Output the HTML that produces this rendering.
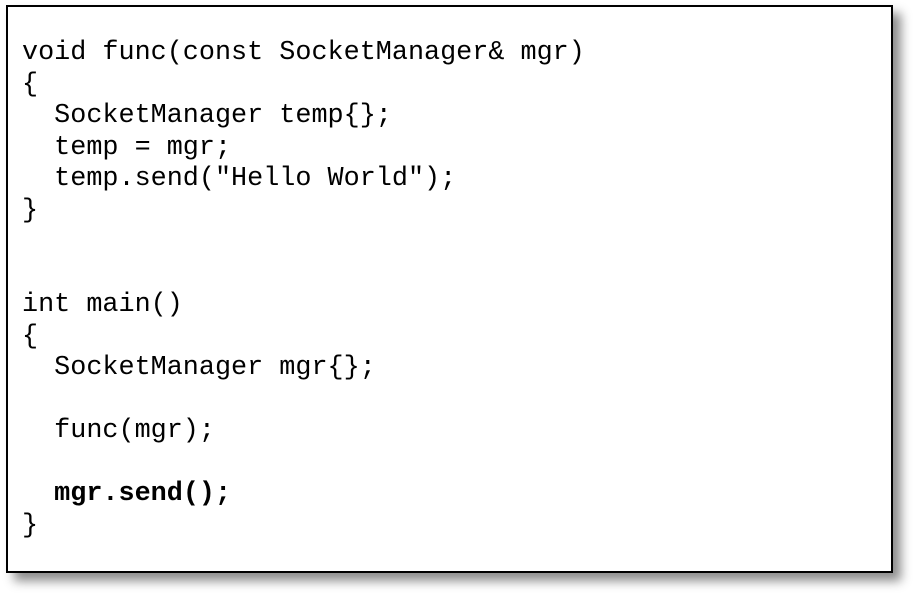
<!DOCTYPE html>
<html><head><style>
body{margin:0;width:922px;height:602px;background:#fff;position:relative;overflow:hidden}
.box{position:absolute;left:6px;top:5px;width:883px;height:564px;border:2px solid #000;background:#fff;box-shadow:8px 8px 10px rgba(0,0,0,0.45)}
pre{position:absolute;left:22px;top:38px;margin:0;font-family:"Liberation Mono",monospace;font-size:26.8px;line-height:31.5px;color:#000}
b{font-weight:bold}
</style></head><body>
<div class="box"></div>
<pre>void func(const SocketManager&amp; mgr)
{
  SocketManager temp{};
  temp = mgr;
  temp.send("Hello World");
}


int main()
{
  SocketManager mgr{};

  func(mgr);

  <b>mgr.send();</b>
}</pre>
</body></html>
